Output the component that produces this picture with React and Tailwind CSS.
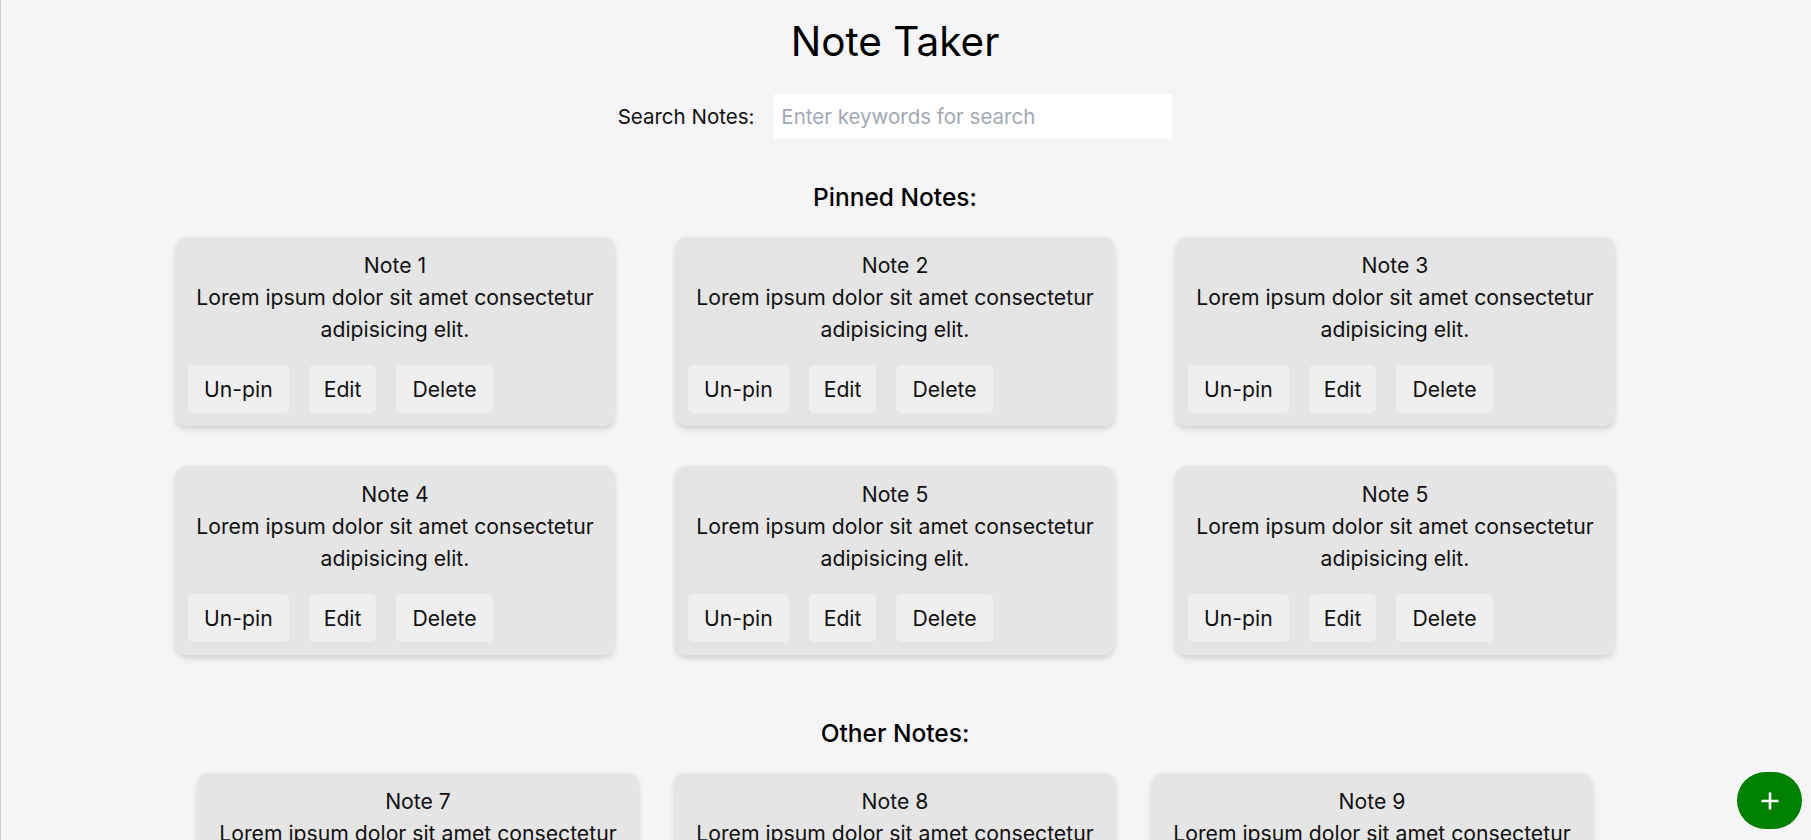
const pinned = [
  { id: 1, title: "Note 1" },
  { id: 2, title: "Note 2" },
  { id: 3, title: "Note 3" },
  { id: 4, title: "Note 4" },
  { id: 5, title: "Note 5" },
  { id: 6, title: "Note 5" },
];

const others = [
  { id: 7, title: "Note 7" },
  { id: 8, title: "Note 8" },
  { id: 9, title: "Note 9" },
];

const body = "Lorem ipsum dolor sit amet consectetur adipisicing elit.";

function NoteCard({ title, width }) {
  return (
    <div
      className={`${width} rounded-[10px] bg-[#e5e5e5] px-3 pt-3 pb-[13px] text-center text-[21.2px] leading-[32px] text-[#111] shadow-[0_3px_6px_rgba(0,0,0,0.16)]`}
    >
      <p>{title}</p>
      <p>{body}</p>
      <div className="mt-5 flex gap-5">
        <button className="rounded-[5px] bg-[#efefef] px-4 py-2">Un-pin</button>
        <button className="rounded-[5px] bg-[#efefef] px-[15px] py-2">Edit</button>
        <button className="rounded-[5px] bg-[#efefef] px-4 py-2">Delete</button>
      </div>
    </div>
  );
}

export default function App() {
  return (
    <div className="h-[840px] overflow-hidden border-l border-[#c9c9cc] bg-[#f5f5f7] font-['Inter',sans-serif] text-black">
      <div className="flex w-[1788px] flex-col items-center pt-[18px]">
        <h1 className="text-[40.5px] leading-[48px] font-normal">Note Taker</h1>

        <div className="mt-7 flex items-center gap-5">
          <label htmlFor="search" className="text-[20.5px] leading-[28px] text-[#111]">
            Search Notes:
          </label>
          <input
            id="search"
            type="text"
            placeholder="Enter keywords for search"
            className="h-[45px] w-[398px] bg-white px-[7px] text-[20.5px] outline-none placeholder:text-[#a3a9b5]"
          />
        </div>

        <h2 className="mt-[42px] text-[24.5px] leading-[32px] font-medium">Pinned Notes:</h2>
        <div className="mt-6 grid grid-cols-3 gap-x-[62px] gap-y-10">
          {pinned.map((n) => (
            <NoteCard key={n.id} title={n.title} width="w-[438px]" />
          ))}
        </div>

        <h2 className="mt-[62px] text-[24.5px] leading-[32px] font-medium">Other Notes:</h2>
        <div className="mt-6 grid grid-cols-3 gap-x-[37px] gap-y-10">
          {others.map((n) => (
            <NoteCard key={n.id} title={n.title} width="w-[440px]" />
          ))}
        </div>
      </div>

      <button className="fixed right-[9px] bottom-[11px] flex h-[57px] w-[65px] items-center justify-center rounded-full bg-[#008000]">
        <svg width="18" height="18" viewBox="0 0 18 18" fill="none" stroke="white" strokeWidth="2.6">
          <path d="M9 0.5V17.5M0.5 9H17.5" />
        </svg>
      </button>
    </div>
  );
}
